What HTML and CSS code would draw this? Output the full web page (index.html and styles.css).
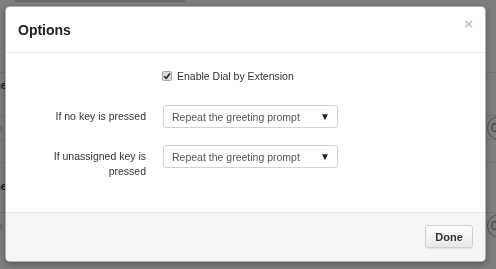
FILE: index.html
```html
<!DOCTYPE html>
<html lang="en">
<head>
  <meta charset="UTF-8" />
  <meta name="viewport" content="width=device-width, initial-scale=1.0"/>
  <title>Options</title>
  <link rel="stylesheet" href="styles.css">
</head>
<body>

<div class="page">
  <div class="topbar"></div>
  <div class="list">
    <div class="row row-a"><span class="row-name">Name</span></div>
    <div class="row row-b"><span class="row-sub">Item</span><span class="count">0</span></div>
    <div class="row row-c"></div>
    <div class="row row-d"><span class="row-name">Name</span></div>
    <div class="row row-e"><span class="row-sub">Item</span><span class="count">0</span></div>
  </div>
  <div class="pointer"></div>
</div>

<div class="modal">
  <div class="modal-header">
    <h3>Options</h3>
    <span class="close">&times;</span>
  </div>

  <div class="modal-body">
    <div class="form-grid">
      <div></div>
      <label class="check">
        <span class="check-box">
          <svg width="8" height="8" viewBox="0 0 8 8"><path d="M1.2 4.2 L3.2 6.2 L6.9 1.6" fill="none" stroke="#222" stroke-width="1.6"/></svg>
        </span>
        Enable Dial by Extension
      </label>

      <div class="field-label">If no key is pressed</div>
      <div class="select"><span>Repeat the greeting prompt</span><span class="arrow">&#9660;</span></div>

      <div class="field-label">If unassigned key is pressed</div>
      <div class="select"><span>Repeat the greeting prompt</span><span class="arrow">&#9660;</span></div>
    </div>
  </div>

  <div class="modal-footer">
    <button class="btn">Done</button>
  </div>
</div>

</body>
</html>
```

FILE: styles.css
```css
* { margin: 0; padding: 0; box-sizing: border-box; }
html, body { height: 100%; overflow: hidden; }

body {
  background: #7f7f7f;
  font-family: "Liberation Sans", Arial, Helvetica, sans-serif;
  font-size: 10.5px;
  color: #333;
}

/* dimmed page behind the dialog */
.page { height: 100%; }

.topbar {
  margin-left: 15px;
  width: 170px;
  height: 2px;
  background: #6c6c6c;
  border-bottom: 1px solid #626262;
}

.list { margin-top: 70px; }

.row {
  display: flex;
  justify-content: space-between;
  align-items: center;
  border-top: 1px solid #747474;
}
.row-a { height: 43px; align-items: flex-start; padding-top: 6px; }
.row-b { height: 24px; }
.row-c { height: 23px; }
.row-d { height: 50px; align-items: flex-start; padding-top: 17px; }
.row-e { height: 27px; }

.row-name {
  margin-left: -23px;
  font-weight: bold;
  font-size: 11px;
  color: #1e1e1e;
}
.row-sub {
  margin-left: -18px;
  color: #5a5a5a;
}

.count {
  width: 24px;
  height: 24px;
  margin-right: -15px;
  border: 1px solid #4f4f4f;
  border-radius: 50%;
  padding-left: 3px;
  line-height: 22px;
  font-size: 12px;
  color: #3a3a3a;
}

.pointer {
  margin: -7px auto 0;
  width: 0;
  height: 0;
  border-left: 7px solid transparent;
  border-right: 7px solid transparent;
  border-bottom: 7px solid #868686;
}

/* dialog */
.modal {
  position: fixed;
  top: 6px;
  left: 5px;
  width: 481px;
  background: #fff;
  border: 1px solid rgba(0,0,0,0.3);
  border-radius: 5px;
  box-shadow: 0 2px 6px rgba(0,0,0,0.35);
  overflow: hidden;
}

.modal-header {
  display: flex;
  justify-content: space-between;
  align-items: flex-start;
  padding: 15px 12px 14px 12px;
  border-bottom: 1px solid #ececec;
}
.modal-header h3 {
  font-size: 14px;
  line-height: 16px;
  font-weight: bold;
  color: #222;
}
.close {
  margin-top: -6px;
  font-size: 15px;
  line-height: 16px;
  font-weight: bold;
  color: #c4c4c4;
}

.modal-body { padding: 15px 0 33px 40px; }

.form-grid {
  display: grid;
  grid-template-columns: 100px 175px;
  column-gap: 17px;
  row-gap: 17px;
  align-items: start;
}

.check {
  display: flex;
  align-items: center;
  gap: 5px;
  height: 16px;
  margin-bottom: 4px;
  margin-left: -1px;
  color: #333;
}
.check-box {
  display: flex;
  align-items: center;
  justify-content: center;
  width: 10px;
  height: 10px;
  background: #dcdcdc;
  border: 1px solid #a8a8a8;
  border-radius: 2px;
}

.field-label {
  text-align: right;
  line-height: 15px;
  padding-top: 4px;
  color: #333;
}

.select {
  display: flex;
  justify-content: space-between;
  align-items: center;
  height: 23px;
  padding: 0 7px 0 8px;
  border: 1px solid #d2d2d2;
  border-radius: 3px;
  color: #555;
}
.arrow {
  font-size: 10px;
  color: #222;
}

.modal-footer {
  display: flex;
  justify-content: flex-end;
  padding: 12px 12px 13px 0;
  background: #f5f5f5;
  border-top: 1px solid #e6e6e6;
}

.btn {
  width: 48px;
  height: 23px;
  font-family: "Liberation Sans", Arial, Helvetica, sans-serif;
  font-size: 11px;
  font-weight: bold;
  color: #333;
  background: linear-gradient(#ffffff, #e8e8e8);
  border: 1px solid #cfcfcf;
  border-radius: 3px;
  box-shadow: 0 1px 1px rgba(0,0,0,0.08);
}
```
